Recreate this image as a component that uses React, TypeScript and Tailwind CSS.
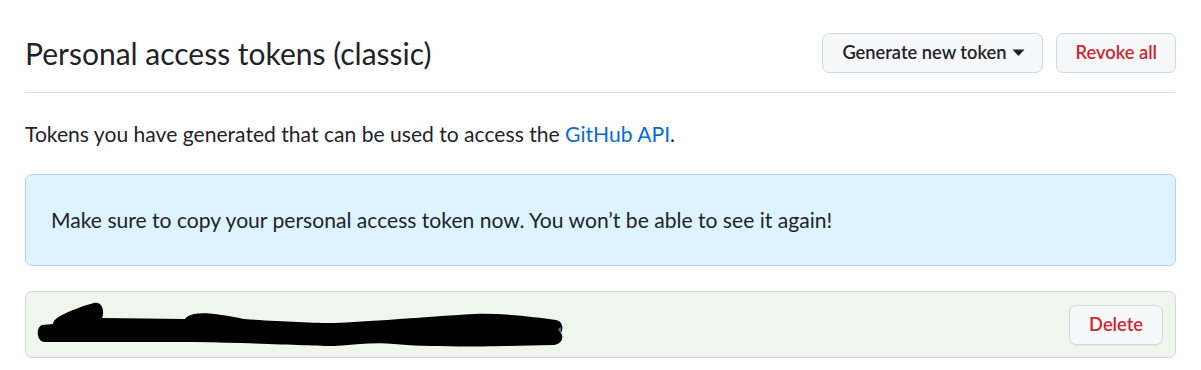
const Caret = () => (
  <svg width="13" height="8" viewBox="0 0 13 8" className="ml-[6px]">
    <path d="M0.5 0.5 L12.5 0.5 L6.5 7 Z" fill="#1f2328" />
  </svg>
);

// black marker scribble that hides the token value
const Scribble = () => (
  <svg width="530" height="56" viewBox="0 -4 530 56" className="block">
    <path
      d="M8 24 C2 26 2 40 10 41 L160 41 C230 42 280 45 300 45 C320 44 340 41 360 43 C390 46 430 46 520 44 C528 43 530 36 527 32 C530 27 528 20 522 19 C500 16 470 12 440 13 C390 16 330 21 300 22 C280 22 240 20 210 18 C190 14 172 11 160 13 C155 14 152 16 151 18 L68 17 C71 10 68 0 60 2 C48 5 36 10 28 14 C22 17 19 20 19 23 Z"
      fill="#000"
    />
    <path d="M524 28 L527 26 L527 33 Z" fill="#2f6fd0" />
  </svg>
);

const App = () => {
  return (
    <div className="bg-white w-[1201px] h-[370px] px-[25px] pt-[33px] font-['Lato',sans-serif] text-[#1f2328]">
      <div className="flex items-center justify-between border-b border-[#d8dee4] pb-[19px]">
        <h2 className="text-[30px] leading-[40px] font-normal">Personal access tokens (classic)</h2>
        <div className="flex gap-[13px]">
          <button className="flex items-center h-[40px] pl-[19px] pr-[17px] rounded-[7px] border border-[#d0d7de] bg-[#f6f8fa] text-[18.3px] font-semibold text-[#1f2328]">
            Generate new token
            <Caret />
          </button>
          <button className="h-[40px] px-[18px] rounded-[7px] border border-[#d0d7de] bg-[#f6f8fa] text-[18.3px] font-semibold text-[#d1242f]">
            Revoke all
          </button>
        </div>
      </div>

      <p className="mt-[28px] text-[21.1px] leading-[26px]">
        Tokens you have generated that can be used to access the{" "}
        <a className="text-[#0969da]">GitHub API</a>.
      </p>

      <div className="mt-[27px] h-[92px] flex items-center px-[25px] rounded-[7px] border border-[#a8d4f8] bg-[#ddf4ff] text-[21.1px]">
        Make sure to copy your personal access token now. You won’t be able to see it again!
      </div>

      <div className="mt-[25px] h-[67px] flex items-center justify-between pl-[8px] pr-[12px] rounded-[7px] border border-[#d0d7de] bg-[#eff7ec]">
        <Scribble />
        <button className="h-[40px] px-[19px] rounded-[7px] border border-[#d0d7de] bg-[#f6f8fa] text-[18.3px] font-semibold text-[#d1242f] shadow-[0_1px_0_rgba(31,35,40,0.04)]">
          Delete
        </button>
      </div>
    </div>
  );
};

export default App;
